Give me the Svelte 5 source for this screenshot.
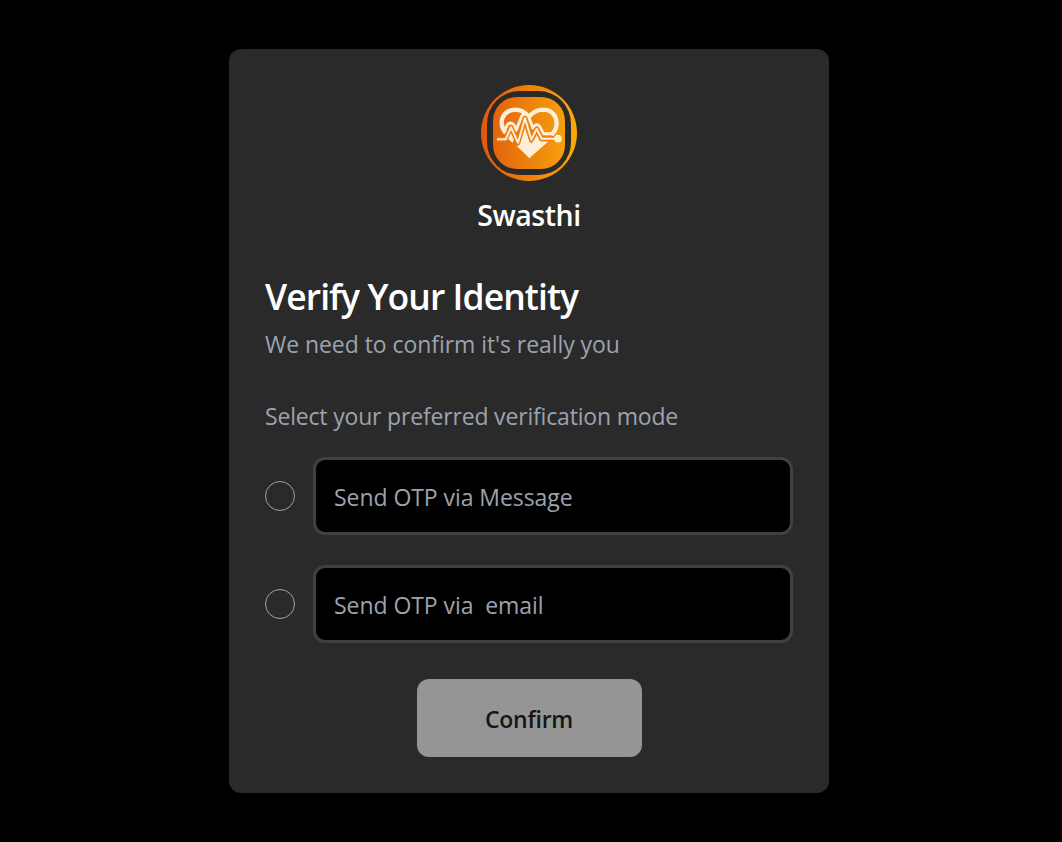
<script>
  const options = [
    { id: 'message', label: 'Send OTP via Message' },
    { id: 'email', label: 'Send OTP via  email' }
  ];
  let selected = $state('');
</script>

<main>
  <section class="card">
    <header>
      <svg class="logo" viewBox="21 21 288 288" aria-hidden="true">
        <defs>
          <linearGradient id="flame" gradientUnits="userSpaceOnUse" x1="21" y1="0" x2="309" y2="0">
            <stop offset="0" stop-color="#e2570f" />
            <stop offset="1" stop-color="#fbab08" />
          </linearGradient>
          <linearGradient id="tile" gradientUnits="userSpaceOnUse" x1="57" y1="0" x2="273" y2="0">
            <stop offset="0" stop-color="#e5620f" />
            <stop offset="1" stop-color="#f5a00a" />
          </linearGradient>
        </defs>
        <circle cx="165" cy="165" r="144" fill="url(#flame)" />
        <rect x="39" y="39" width="252" height="252" rx="98" fill="#2a2a2a" />
        <rect x="57" y="57" width="216" height="216" rx="72" fill="url(#tile)" />
        <g fill="none" stroke="#ffefd9" stroke-width="13">
          <path d="M95 165C72 135 84 97 124 95Q148 95 165 117" />
          <path d="M162 121Q179 95 208 95C249 96 260 143 233 170" />
        </g>
        <path d="M84 150L97 175L112 151L122 178L116 194Q94 180 84 150Z" fill="#ffefd9" />
        <path d="M90 160L101 139Q111 130 119 140L126 157L143 115Q154 97 163 116L177 150Q189 131 199 149L208 167H240" fill="none" stroke="#ffefd9" stroke-width="9" stroke-linejoin="round" />
        <path d="M127 203H134L144 182L152 145L167 190L178 205L187 180L193 190H222L166 240Z" fill="#ffefd9" />
        <path d="M150 155L168 204L188 170L199 191H222L166 240L134 204Z" fill="#ffefd9" />
        <path d="M69 184H94L111 148L132 194L153 121L172 185L188 153L203 182H246" fill="none" stroke="#ec8010" stroke-width="15" stroke-linejoin="round" />
        <path d="M69 184H95L111 148L132 194L153 121L172 185L188 153L203 182H246" fill="none" stroke="#ffefd9" stroke-width="6" stroke-linejoin="round" />
        <circle cx="252" cy="182" r="11.5" fill="#ffefd9" />
      </svg>
      <div class="brand">Swasthi</div>
    </header>
    <h1>Verify Your Identity</h1>
    <p class="sub">We need to confirm it's really you</p>
    <p class="prompt">Select your preferred verification mode</p>
    <div class="options">
      {#each options as option}
        <label>
          <input type="radio" name="mode" value={option.id} bind:group={selected} />
          <span class="field">{option.label}</span>
        </label>
      {/each}
    </div>
    <button disabled={!selected}>Confirm</button>
  </section>
</main>

<style>
  :global(body) {
    background: #000;
  }
  main {
    box-sizing: border-box;
    height: 842px;
    padding: 49px 0 0 229px;
    font-family: 'Open Sans', 'Noto Sans', sans-serif;
    font-size: 23px;
    color: #9ca3af;
  }
  .card {
    box-sizing: border-box;
    width: 600px;
    height: 744px;
    padding: 36px;
    border-radius: 12px;
    background: #2a2a2a;
    display: flex;
    flex-direction: column;
  }
  header {
    display: flex;
    flex-direction: column;
    align-items: center;
  }
  .logo {
    display: block;
    width: 96px;
    height: 96px;
  }
  .brand {
    margin-top: 12px;
    line-height: 45px;
    font-size: 28.5px;
    font-weight: 600;
    letter-spacing: -0.45px;
    color: #fff;
  }
  h1 {
    margin: 31px 0 0;
    line-height: 54px;
    font-size: 35.5px;
    font-weight: 600;
    letter-spacing: -0.92px;
    color: #fff;
  }
  p {
    margin: 0;
    line-height: 36px;
    white-space: nowrap;
  }
  .sub {
    margin-top: 3px;
    letter-spacing: -0.06px;
  }
  .prompt {
    margin-top: 36px;
    letter-spacing: -0.18px;
  }
  .options {
    display: flex;
    flex-direction: column;
    gap: 30px;
    margin-top: 23px;
  }
  label {
    display: flex;
    align-items: center;
    gap: 18px;
    height: 78px;
  }
  input {
    appearance: none;
    box-sizing: border-box;
    flex: none;
    width: 30px;
    height: 30px;
    margin: 0;
    border: 1px solid #9ca3af;
    border-radius: 50%;
  }
  input:checked {
    background: #9ca3af;
  }
  .field {
    box-sizing: border-box;
    width: 480px;
    height: 78px;
    padding: 1px 18px 0;
    border: 3px solid #404040;
    border-radius: 12px;
    background: #000;
    line-height: 72px;
    letter-spacing: -0.06px;
    white-space: pre;
  }
  button {
    align-self: center;
    width: 225px;
    height: 78px;
    margin-top: 36px;
    padding: 2px 0 0;
    border: 0;
    border-radius: 12px;
    background: #959595;
    color: #151515;
    font: 600 23px 'Open Sans', 'Noto Sans', sans-serif;
    letter-spacing: -0.25px;
  }
</style>
